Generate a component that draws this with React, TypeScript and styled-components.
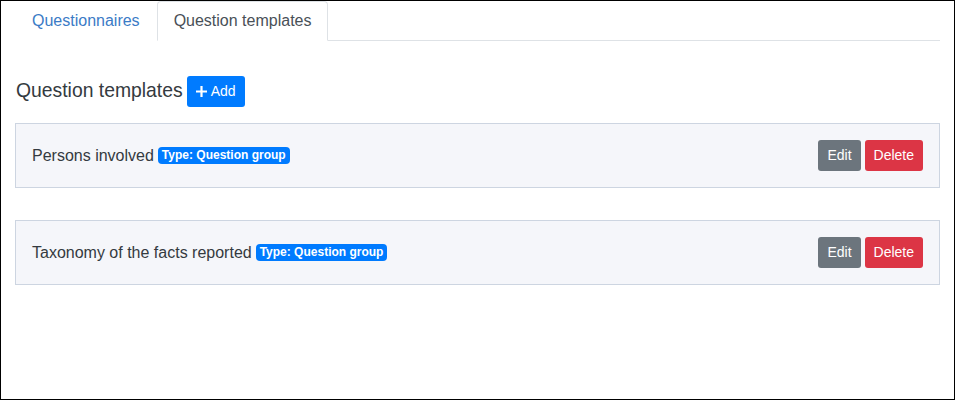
import styled, { createGlobalStyle } from 'styled-components';

const GlobalStyle = createGlobalStyle`
  html, body {
    margin: 0;
    padding: 0;
    background: #fff;
  }
  body {
    font-family: "Liberation Sans", Arial, sans-serif;
    font-size: 16px;
    line-height: 1.5;
    color: #343a40;
  }
  * { box-sizing: border-box; }
`;

const Frame = styled.div`
  height: 400px;
  border: 1px solid #000;
  padding: 0 14px;
  overflow: hidden;
`;

const TabBar = styled.ul`
  display: flex;
  list-style: none;
  margin: 0;
  padding: 0;
  border-bottom: 1px solid #dee2e6;
`;

const Tab = styled.li<{ $active?: boolean }>`
  margin-bottom: -1px;
  padding: 7px 16px;
  border: 1px solid transparent;
  border-color: ${p => (p.$active ? '#dee2e6 #dee2e6 #fff' : 'transparent')};
  border-top-left-radius: 4px;
  border-top-right-radius: 4px;
  background: #fff;
  color: ${p => (p.$active ? '#495057' : '#3b7bc6')};
  cursor: pointer;
`;

const Header = styled.div`
  display: flex;
  align-items: center;
  gap: 4px;
  margin: 35px 0 16px 1px;
`;

const Title = styled.h5`
  margin: 0 0 2px;
  font-size: 19.35px;
  font-weight: 400;
  line-height: 1.2;
  color: #343a40;
`;

const Button = styled.button<{ $tone: 'primary' | 'secondary' | 'danger' }>`
  display: inline-flex;
  align-items: center;
  gap: 4px;
  height: 31px;
  padding: 4px 8px;
  border: 1px solid transparent;
  border-radius: 3px;
  font-family: inherit;
  font-size: 14px;
  line-height: 1.5;
  color: #fff;
  cursor: pointer;
  background: ${p =>
    p.$tone === 'primary' ? '#007bff' : p.$tone === 'danger' ? '#dc3545' : '#6c757d'};
`;

const List = styled.div`
  display: flex;
  flex-direction: column;
  gap: 32px;
`;

const Card = styled.div`
  display: flex;
  align-items: center;
  justify-content: space-between;
  padding: 16px;
  background: #f5f6fa;
  border: 1px solid #cdd5e1;
`;

const Name = styled.div`
  display: flex;
  align-items: center;
  gap: 4px;
  color: #343a40;
`;

const Badge = styled.span`
  display: inline-block;
  padding: 2px 4px 3px;
  border-radius: 4px;
  background: #007bff;
  color: #fff;
  font-size: 12px;
  font-weight: 700;
  line-height: 1;
`;

const Actions = styled.div`
  display: flex;
  gap: 4px;
`;

function PlusIcon() {
  return (
    <svg width="11" height="11" viewBox="0 0 10 10" aria-hidden="true">
      <path d="M4 0h2v4h4v2H6v4H4V6H0V4h4z" fill="#fff" />
    </svg>
  );
}

const templates = ['Persons involved', 'Taxonomy of the facts reported'];

export default function App() {
  return (
    <>
      <GlobalStyle />
      <Frame>
        <TabBar>
          <Tab>Questionnaires</Tab>
          <Tab $active>Question templates</Tab>
        </TabBar>
        <Header>
          <Title>Question templates</Title>
          <Button $tone="primary">
            <PlusIcon />
            Add
          </Button>
        </Header>
        <List>
          {templates.map(name => (
            <Card key={name}>
              <Name>
                {name}
                <Badge>Type: Question group</Badge>
              </Name>
              <Actions>
                <Button $tone="secondary">Edit</Button>
                <Button $tone="danger">Delete</Button>
              </Actions>
            </Card>
          ))}
        </List>
      </Frame>
    </>
  );
}
